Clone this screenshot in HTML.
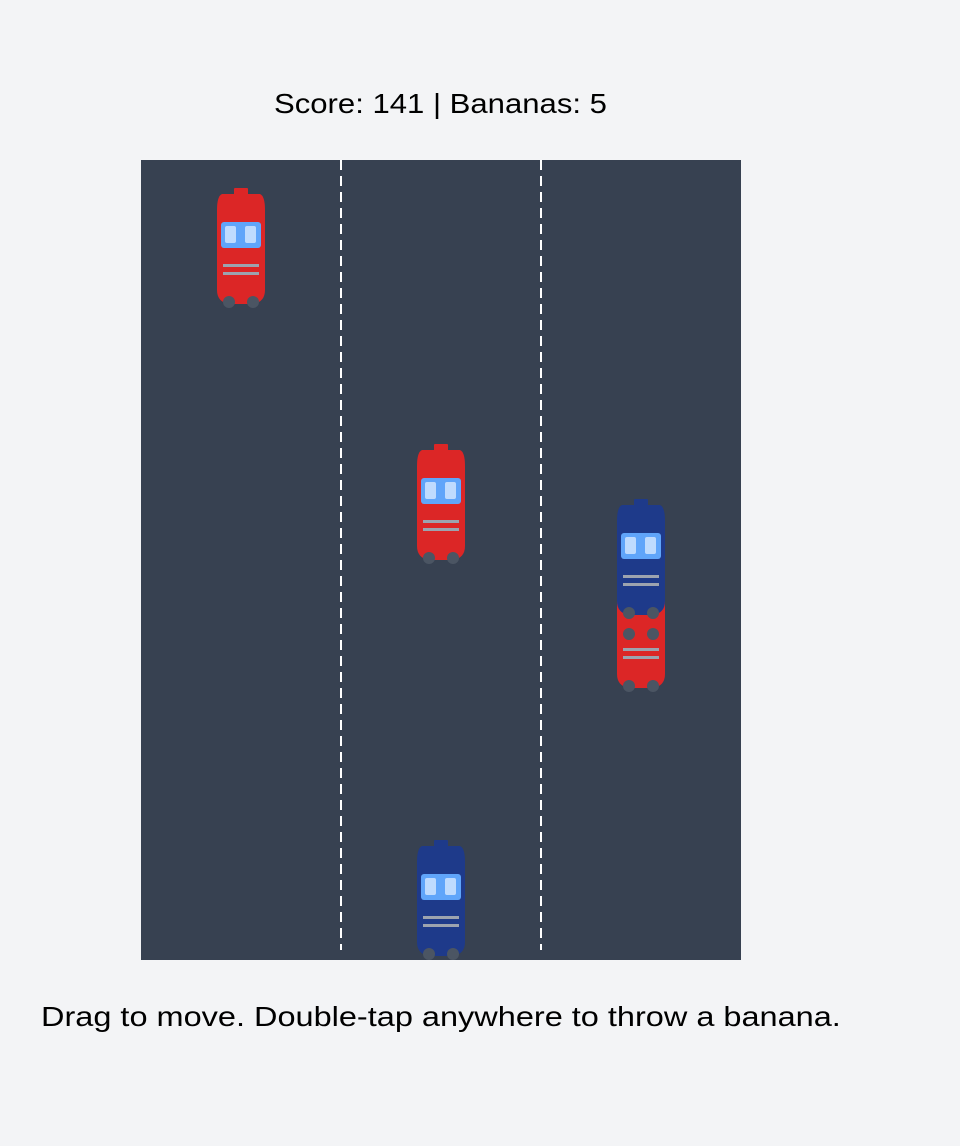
<!DOCTYPE html>
<html><head><style>
body{margin:0;width:960px;height:1146px;background:#f3f4f6;font-family:"Liberation Sans",sans-serif;color:#000;position:relative;overflow:hidden}
.t{position:absolute;font-size:28px;white-space:nowrap}
</style></head><body>
<div class="t" style="left:274px;top:88px;transform:scaleX(1.11);transform-origin:0 0">Score: 141 | Bananas: 5</div>
<svg style="position:absolute;left:0;top:0" width="960" height="1146">
<defs>
<g id="body">
<rect x="17" y="0" width="14" height="8" rx="1"/>
<path d="M5,6 L43,6 Q48,8 48,22 L48,102 Q48,114 36,116 L12,116 Q0,114 0,102 L0,22 Q0,8 5,6Z"/>
<rect x="6" y="76" width="36" height="3" fill="#9ca3af"/>
<rect x="6" y="84" width="36" height="3" fill="#9ca3af"/>
<circle cx="12" cy="114" r="6" fill="#4b5563"/>
<circle cx="36" cy="114" r="6" fill="#4b5563"/>
</g>
<g id="car">
<use href="#body"/>
<rect x="4" y="34" width="40" height="26" rx="3" fill="#60a5fa"/>
<rect x="8" y="38" width="11" height="17" rx="2" fill="#bfdbfe"/>
<rect x="28" y="38" width="11" height="17" rx="2" fill="#bfdbfe"/>
</g>
</defs>
<rect x="141" y="160" width="600" height="800" fill="#374151"/>
<line x1="341" y1="160" x2="341" y2="950" stroke="#fff" stroke-width="2" stroke-dasharray="10,6"/>
<line x1="541" y1="160" x2="541" y2="950" stroke="#fff" stroke-width="2" stroke-dasharray="10,6"/>
<use href="#car" x="217" y="188" fill="#dc2626"/>
<use href="#car" x="417" y="444" fill="#dc2626"/>
<use href="#body" x="617" y="572" fill="#dc2626"/>
<circle cx="629" cy="634" r="6" fill="#4b5563"/>
<circle cx="653" cy="634" r="6" fill="#4b5563"/>
<use href="#car" x="617" y="499" fill="#1e3a8a"/>
<use href="#car" x="417" y="840" fill="#1e3a8a"/>
</svg>
<div class="t" style="left:41px;top:1001px;transform:scaleX(1.16);transform-origin:0 0">Drag to move. Double-tap anywhere to throw a banana.</div>
</body></html>
